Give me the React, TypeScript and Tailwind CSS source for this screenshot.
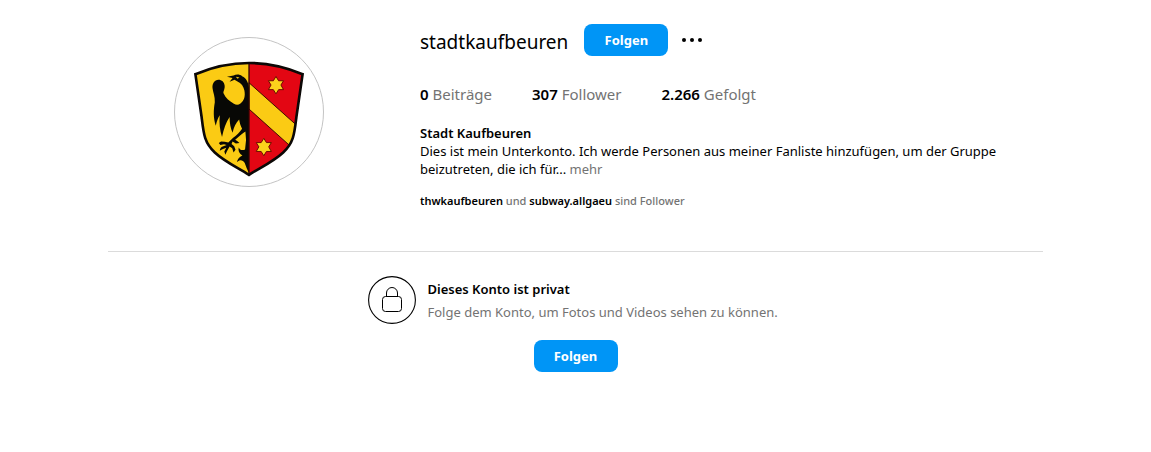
import type { ReactNode } from "react";

const stats = [
  { value: "0", label: "Beiträge" },
  { value: "307", label: "Follower" },
  { value: "2.266", label: "Gefolgt" },
];

function FollowButton() {
  return (
    <button
      type="button"
      className="h-8 w-[84px] rounded-lg bg-[#0095f6] text-[13px] font-bold text-white"
    >
      Folgen
    </button>
  );
}

function UserLink({ children }: { children: ReactNode }) {
  return (
    <a href="#" className="font-semibold text-black">
      {children}
    </a>
  );
}

function Star({ x, y }: { x: number; y: number }) {
  return (
    <path
      transform={`translate(${x} ${y})`}
      d="M0-26 8-13 23-13 15 0 23 14 8 14 0 27-8 14-23 14-15 0-23-13-8-13Z"
      fill="#fbd31c"
      stroke="#6d0a00"
      strokeWidth="3"
    />
  );
}

function CoatOfArms() {
  return (
    <svg viewBox="15 21 450 450" className="size-full" role="img" aria-label="Wappen">
      <defs>
        <clipPath id="shield">
          <path d="M77 131Q158 97 240 97Q322 97 403 131L384 262C378 312 376 340 344 369C314 397 276 414 240 437C204 414 166 397 136 369C104 340 102 312 96 262Z" />
        </clipPath>
      </defs>
      <g clipPath="url(#shield)">
        <path d="M70 90H240V445H70Z" fill="#fbcb14" />
        <path d="M240 90H410V445H240Z" fill="#e30613" />
        <path
          d="M240 157 390 291 366 350 240 237Z"
          fill="#fbcb14"
          stroke="#3d0a00"
          strokeWidth="3"
        />
        <path
          d="M240 172C238 155 232 143 219 137C212 131 201 131 193 135L173 139L190 143L181 154L196 148L205 153C216 158 224 168 226 181C229 198 226 212 214 220C208 225 201 225 194 221C180 213 168 203 163 190C160 184 167 178 166 166C165 155 157 148 147 148C135 149 128 159 129 173C131 188 137 199 136 216C132 240 131 263 139 288C142 274 146 264 151 256C149 279 151 301 158 322C163 297 170 277 181 261C181 279 184 296 190 309C194 292 200 279 210 269C212 281 215 290 219 297C212 308 202 317 191 325L177 339C170 337 163 336 155 336L148 340L153 346L164 344L172 346L160 351C155 353 152 357 151 364L159 359L171 355L165 366L168 376L173 365L181 351L189 356L193 369L199 361L195 350L187 343L190 336L200 342L211 340L204 334L198 330C209 321 219 312 229 305L231 331L228 360C220 364 211 361 209 354C206 363 211 374 220 378C213 381 204 388 204 399C213 389 221 393 227 401L233 417L240 432Z"
          fill="#080805"
        />
        <path d="M200 139 211 141 205 145Z" fill="#fbcb14" />
        <path d="M240 95V437" stroke="#2b0502" strokeWidth="4" />
      </g>
      <Star x={322} y={164} />
      <Star x={285} y={352} />
      <path
        d="M77 131Q158 97 240 97Q322 97 403 131L384 262C378 312 376 340 344 369C314 397 276 414 240 437C204 414 166 397 136 369C104 340 102 312 96 262Z"
        fill="none"
        stroke="#0c0806"
        strokeWidth="8"
      />
    </svg>
  );
}

function LockIcon() {
  return (
    <svg viewBox="0 0 48 48" className="size-12 shrink-0" fill="none" stroke="#000" aria-hidden="true">
      <circle cx="24" cy="24" r="23.4" strokeWidth="1.1" />
      <rect x="14.5" y="20.5" width="19" height="15" rx="3" />
      <path d="M18.5 20.5V17a5.5 5.5 0 0 1 11 0v3.5" />
    </svg>
  );
}

export default function App() {
  return (
    <main className="mx-auto max-w-[935px] bg-white font-['Noto_Sans','Segoe_UI',sans-serif] text-sm text-black">
      <header className="flex border-b border-[#dbdbdb] pt-6 pb-[42px]">
        <div className="flex w-[282px] shrink-0 justify-center pt-[13px]">
          <div className="size-[150px] overflow-hidden rounded-full border border-[#c4c4c4]">
            <CoatOfArms />
          </div>
        </div>
        <section className="ml-[30px] min-w-0 flex-1">
          <div className="flex h-8 items-center">
            <h2 className="mr-4 pt-1 text-[19px] leading-7">stadtkaufbeuren</h2>
            <FollowButton />
            <button type="button" aria-label="Optionen" className="ml-2 flex size-8 items-center justify-center">
              <svg viewBox="0 0 24 24" className="size-8" aria-hidden="true">
                <circle cx="6" cy="12" r="1.5" />
                <circle cx="12" cy="12" r="1.5" />
                <circle cx="18" cy="12" r="1.5" />
              </svg>
            </button>
          </div>
          <ul className="mt-[26px] flex gap-10 text-[15px] leading-6 text-[#737373]">
            {stats.map((stat) => (
              <li key={stat.label}>
                <span className="font-semibold text-black">{stat.value}</span> {stat.label}
              </li>
            ))}
          </ul>
          <div className="mt-[18px] text-[13px] leading-[18px]">
            <h1 className="font-semibold">Stadt Kaufbeuren</h1>
            <p className="max-w-[600px]">
              Dies ist mein Unterkonto. Ich werde Personen aus meiner Fanliste hinzufügen, um der Gruppe
              beizutreten, die ich für...{" "}
              <a href="#" className="text-[#737373]">
                mehr
              </a>
            </p>
          </div>
          <p className="mt-[15px] text-[11px] leading-4 font-medium text-[#737373]">
            <UserLink>thwkaufbeuren</UserLink> und <UserLink>subway.allgaeu</UserLink> sind Follower
          </p>
        </section>
      </header>
      <section className="flex flex-col items-center pt-6">
        <div className="flex items-center gap-3">
          <LockIcon />
          <div className="min-w-[356px] text-[13px] leading-[18px]">
            <h2 className="font-semibold">Dieses Konto ist privat</h2>
            <p className="mt-[5px] text-[#737373]">Folge dem Konto, um Fotos und Videos sehen zu können.</p>
          </div>
        </div>
        <div className="mt-4">
          <FollowButton />
        </div>
      </section>
    </main>
  );
}
